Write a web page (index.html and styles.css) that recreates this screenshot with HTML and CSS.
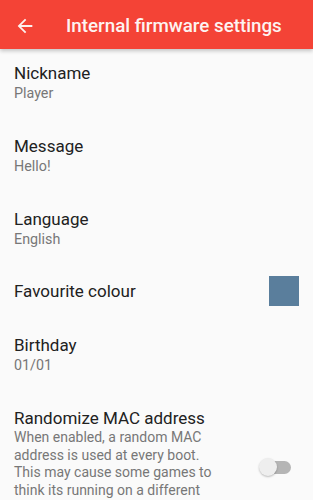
FILE: index.html
```html
<!DOCTYPE html>
<html lang="en">
<head>
<meta charset="utf-8">
<title>Internal firmware settings</title>
<link rel="stylesheet" href="styles.css">
</head>
<body>
<div class="app">
  <header class="toolbar">
    <svg class="back" viewBox="0 0 24 24" width="22" height="22" aria-hidden="true">
      <path d="M20 11H7.83l5.59-5.59L12 4l-8 8 8 8 1.41-1.41L7.83 13H20v-2z" fill="currentColor"/>
    </svg>
    <h1 class="toolbar-title">Internal firmware settings</h1>
  </header>
  <main class="prefs">
    <div class="pref pref-first">
      <div class="pref-text">
        <div class="pref-title">Nickname</div>
        <div class="pref-summary">Player</div>
      </div>
    </div>
    <div class="pref">
      <div class="pref-text">
        <div class="pref-title">Message</div>
        <div class="pref-summary">Hello!</div>
      </div>
    </div>
    <div class="pref">
      <div class="pref-text">
        <div class="pref-title">Language</div>
        <div class="pref-summary">English</div>
      </div>
    </div>
    <div class="pref pref-single">
      <div class="pref-text">
        <div class="pref-title">Favourite colour</div>
      </div>
      <div class="swatch"></div>
    </div>
    <div class="pref">
      <div class="pref-text">
        <div class="pref-title">Birthday</div>
        <div class="pref-summary">01/01</div>
      </div>
    </div>
    <div class="pref pref-switch">
      <div class="pref-text pref-text-narrow">
        <div class="pref-title">Randomize MAC address</div>
        <div class="pref-summary pref-desc">When enabled, a random MAC address is used at every boot.<br>This may cause some games to think its running on a different console.</div>
      </div>
      <div class="switch">
        <span class="switch-track"></span>
        <span class="switch-thumb"></span>
      </div>
    </div>
  </main>
</div>
</body>
</html>
```
FILE: styles.css
```css
html, body {
  margin: 0;
  padding: 0;
}
body {
  width: 313px;
  height: 500px;
  overflow: hidden;
  background: #fafafa;
  font-family: Roboto, "Noto Sans", "Liberation Sans", sans-serif;
}
.app {
  display: flex;
  flex-direction: column;
}
.toolbar {
  height: 49px;
  box-sizing: border-box;
  padding: 3px 0 0 14px;
  display: flex;
  align-items: center;
  background: #f44336;
  color: #fff;
  box-shadow: 0 2px 4px rgba(0, 0, 0, 0.22);
  position: relative;
  z-index: 1;
}
.back {
  display: block;
  flex: none;
  color: #fdf0ee;
}
.toolbar-title {
  margin: 0 0 0 30px;
  font-size: 18.8px;
  font-weight: 500;
  line-height: 24px;
  color: #fdf3f1;
  white-space: nowrap;
}
.prefs {
  display: flex;
  flex-direction: column;
}
.pref {
  display: flex;
  align-items: center;
  padding: 16px 14px 17px 14px;
}
.pref-first {
  padding-top: 13px;
}
.pref-single {
  padding-top: 11px;
  padding-bottom: 12px;
  min-height: 30px;
}
.pref-text {
  flex: 1;
  min-width: 0;
}
.pref-text-narrow {
  flex: 0 0 226px;
}
.pref-title {
  font-size: 17px;
  line-height: 22px;
  color: #212121;
}
.pref-summary {
  font-size: 14.3px;
  line-height: 18px;
  color: #777;
}
.pref-desc {
  font-size: 14px;
  line-height: 17.5px;
}
.swatch {
  width: 30px;
  height: 30px;
  background: #5a7e9c;
  flex: none;
}
.pref-switch {
  align-items: center;
}
.switch {
  position: relative;
  width: 34px;
  height: 20px;
  margin: 12px 0 0 19px;
  flex: none;
}
.switch-track {
  position: absolute;
  left: 4px;
  top: 3px;
  width: 28px;
  height: 13px;
  border-radius: 7px;
  background: #b5b5b5;
}
.switch-thumb {
  position: absolute;
  left: 0;
  top: 0;
  width: 18px;
  height: 18px;
  border-radius: 50%;
  background: #eeeeee;
  box-shadow: 0 1px 2px rgba(0, 0, 0, 0.25);
}
```
